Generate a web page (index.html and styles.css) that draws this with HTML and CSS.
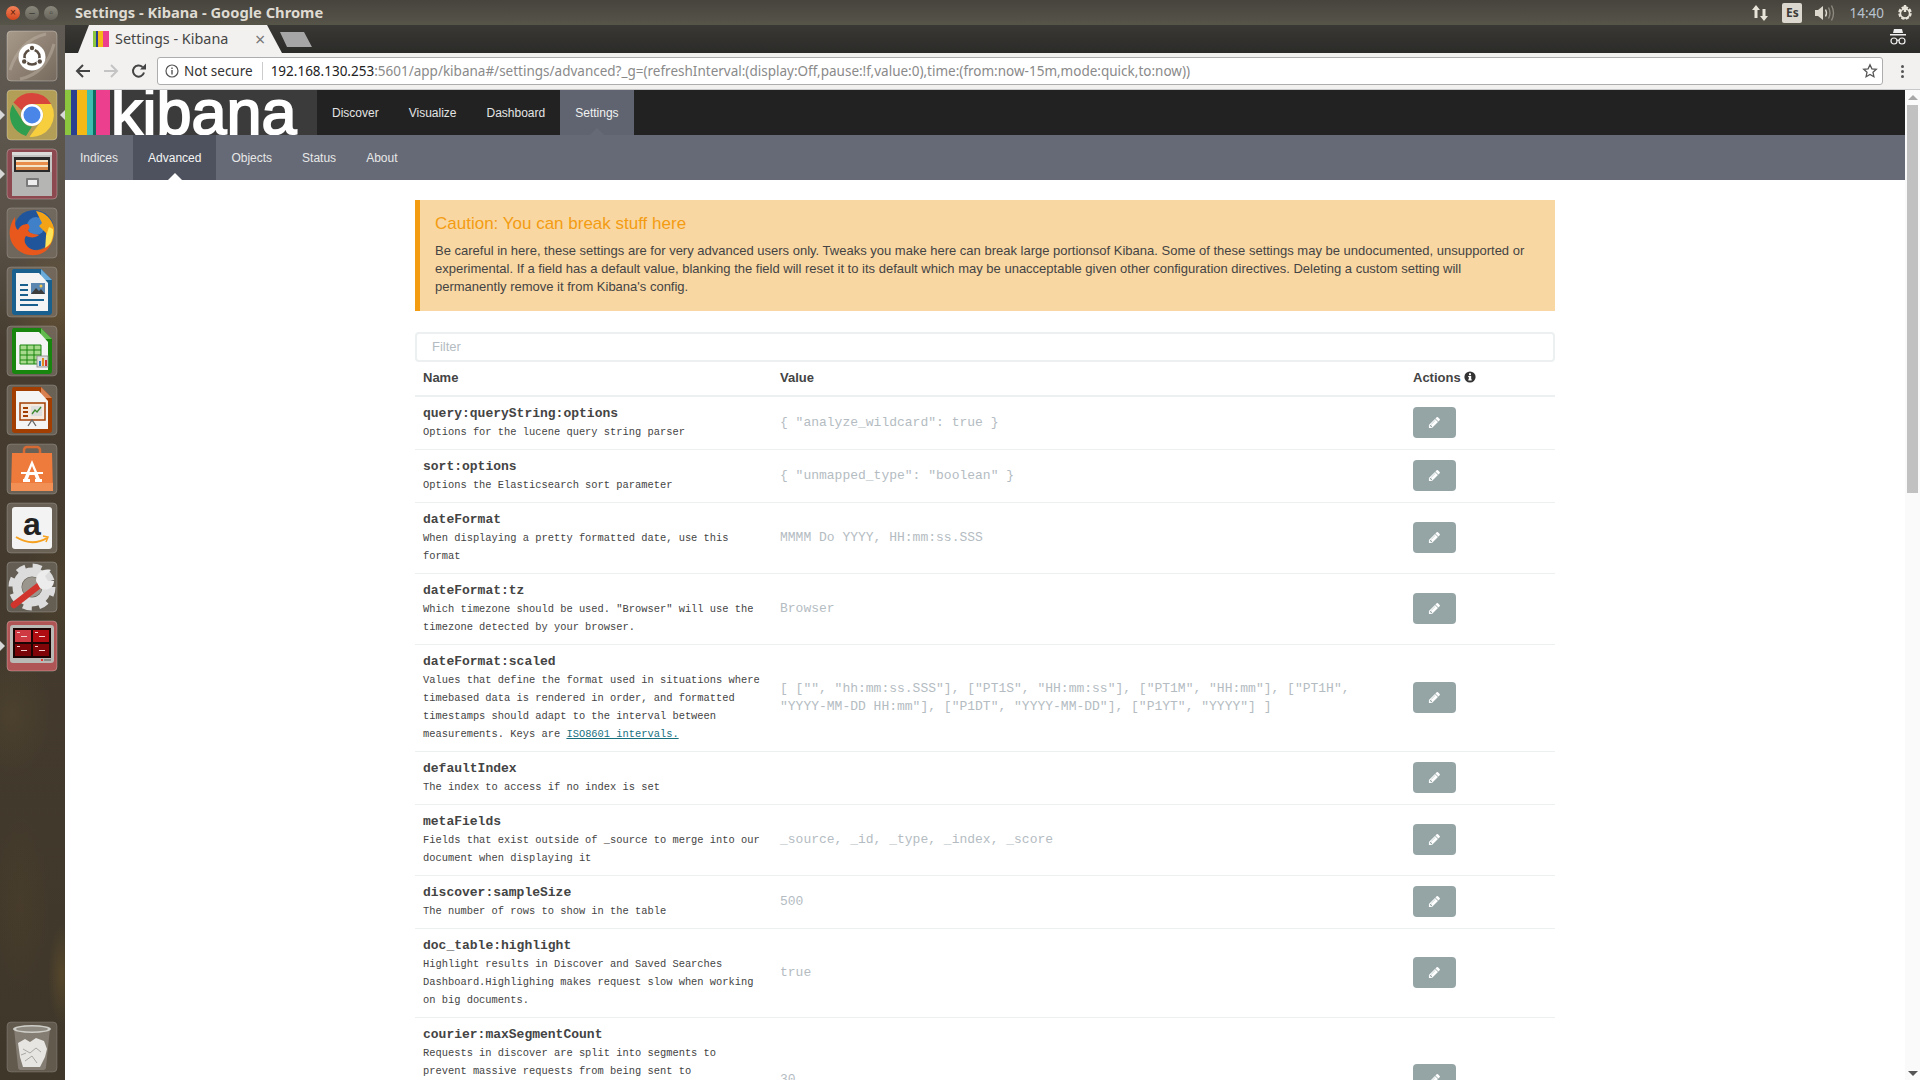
FILE: index.html
```html
<!DOCTYPE html>
<html lang="en">
<head>
<meta charset="utf-8">
<title>Settings - Kibana - Google Chrome</title>
<link rel="stylesheet" href="styles.css">
</head>
<body>
<svg class="defs" width="0" height="0" aria-hidden="true">
  <symbol id="pencil" viewBox="0 0 1792 1792"><path fill="currentColor" d="M491 1536l91-91-235-235-91 91v107h128v128h107zm523-928q0-22-22-22-10 0-17 7l-542 542q-7 7-7 17 0 22 22 22 10 0 17-7l542-542q7-7 7-17zm-54-192l416 416-832 832h-416v-416zm683 96q0 53-37 90l-166 166-416-416 166-165q36-38 90-38 53 0 91 38l235 234q37 39 37 91z"/></symbol>
</svg>
<div class="desktop">
  <header class="topbar">
    <div class="winbtns">
      <span class="wb wb-close">×</span>
      <span class="wb wb-min">–</span>
      <span class="wb wb-max">▫</span>
    </div>
    <div class="wintitle">Settings - Kibana - Google Chrome</div>
    <div class="tray">
      <svg class="tray-arrows" width="18" height="18" viewBox="0 0 18 18"><path fill="#e8e4da" d="M5 1l4 5H6.500v8h-3V6H1zM13 17l-4-5h2.500V5h3v7H17z"/></svg>
      <span class="tray-es">Es</span>
      <svg class="tray-vol" width="22" height="18" viewBox="0 0 22 18"><path fill="#dcd8ce" d="M1 6h3l5-4v14l-5-4H1z"/><path fill="none" stroke="#dcd8ce" stroke-width="1.400" d="M11.500 5.500q2 3.500 0 7"/><path fill="none" stroke="#8d897f" stroke-width="1.400" d="M14.500 3.500q3 5.500 0 11M17.500 1.500q4 7.500 0 15"/></svg>
      <span class="tray-time">14:40</span>
      <svg class="tray-power" width="18" height="18" viewBox="0 0 18 18"><path fill="none" stroke="#e8e4da" stroke-width="2.600" stroke-dasharray="3 1.400" d="M9 3.500a5.500 5.500 0 1 1-.01 0"/><circle cx="9" cy="9.500" r="4.600" fill="none" stroke="#e8e4da" stroke-width="1.600"/><path stroke="#e8e4da" stroke-width="2.400" d="M9 1v7"/></svg>
    </div>
  </header>
  <div class="below">
    <nav class="launcher">
      <a class="tile tile-dash"><svg viewBox="0 0 52 52"><defs><linearGradient id="dashbg" x1="0" y1="0" x2="1" y2="1"><stop offset="0" stop-color="#a89a8a"/><stop offset="1" stop-color="#766a5e"/></linearGradient></defs><rect x="1" y="1" width="50" height="50" rx="4" fill="url(#dashbg)"/><path d="M4 40Q14 10 40 4M48 14Q40 44 14 49" fill="none" stroke="#c4b8aa" stroke-width="3" opacity=".45"/><circle cx="26" cy="27" r="13.500" fill="#fff"/><circle cx="26" cy="27" r="7.500" fill="none" stroke="#5a4d42" stroke-width="2.600"/><circle cx="26" cy="18" r="3.400" fill="#fff"/><circle cx="18.200" cy="31.500" r="3.400" fill="#fff"/><circle cx="33.800" cy="31.500" r="3.400" fill="#fff"/><circle cx="26" cy="18" r="2.200" fill="#5a4d42"/><circle cx="18.200" cy="31.500" r="2.200" fill="#5a4d42"/><circle cx="33.800" cy="31.500" r="2.200" fill="#5a4d42"/></svg></a>
      <a class="tile tile-chrome pip-both"><svg viewBox="0 0 52 52"><rect x="1" y="1" width="50" height="50" rx="4" fill="#b39e57"/><path d="M26 4a22 22 0 0 1 19.100 11H26a11 11 0 0 0-10 6.500L7.500 13.500A22 22 0 0 1 26 4z" fill="#d8453b"/><path d="M6.500 15.500l10.500 17a11 11 0 0 0 9 5l-6 9.500A22 22 0 0 1 6.500 15.500z" fill="#2f9e4e"/><path d="M45 15H28a11 11 0 0 1 8 16L23.500 47.800A22 22 0 0 0 45 15z" fill="#f7cf3e"/><circle cx="26" cy="26" r="11" fill="#fff"/><circle cx="26" cy="26" r="8.500" fill="#4a86e8"/></svg></a>
      <a class="tile tile-files pip-left"><svg viewBox="0 0 52 52"><rect x="1" y="1" width="50" height="50" rx="4" fill="#8c4a50"/><rect x="6" y="4" width="40" height="44" rx="2" fill="#c4c4c2"/><rect x="6" y="4" width="40" height="3" fill="#dcdcda"/><rect x="8" y="9" width="36" height="15" fill="#2a2a2a"/><rect x="10" y="12" width="32" height="2" fill="#f5e5c8"/><rect x="10" y="14" width="32" height="3" fill="#e98d4a"/><rect x="10" y="17" width="32" height="2" fill="#f5e5c8"/><rect x="10" y="19" width="32" height="3" fill="#d9884a"/><path d="M6 24h40v24H6z" fill="#b5b5b3"/><rect x="20" y="30" width="13" height="9" rx="1" fill="#7a7a7a"/><rect x="22" y="32" width="9" height="5" fill="#eee"/></svg></a>
      <a class="tile tile-glass"><svg viewBox="0 0 52 52"><rect x="1" y="1" width="50" height="50" rx="4" fill="#7b7267" opacity=".7"/><circle cx="28" cy="23" r="20" fill="#21559b"/><circle cx="30" cy="19" r="9" fill="#3f80c8"/><path d="M30 4c9 1 16 8 18 17 1 9-3 17-7 21l-1-16-7-7 3-3z" fill="#f4a316"/><path d="M47 22c1 9-3 17-8 21l1-14 3-9z" fill="#fde25a"/><path d="M9 10C3 18 2 28 6 36c5 9 14 13 24 12 8-1 13-6 15-12-5 6-13 9-20 6-6-3-8-9-5-13 4 2 10 2 13-1-6-1-10-2-11-5 2-2 2-4 0-6-5 0-8 2-10 6-3-2-3-7-3-13z" fill="#e8571b"/></svg></a>
      <a class="tile tile-glass"><svg viewBox="0 0 52 52"><rect x="1" y="1" width="50" height="50" rx="4" fill="#7b7267" opacity=".7"/><path d="M7 3h28l11 11v32a3 3 0 0 1-3 3H9a3 3 0 0 1-3-3V5z" fill="#19608f"/><path d="M35 3l11 11H35z" fill="#6aaad8"/><path d="M10 7h23l9 10v28H10z" fill="#f4f4f4"/><g fill="#19608f"><rect x="14" y="18" width="8" height="2"/><rect x="14" y="23" width="8" height="2"/><rect x="14" y="28" width="8" height="2"/><rect x="14" y="33" width="24" height="2"/><rect x="14" y="38" width="18" height="2"/></g><rect x="25" y="17" width="14" height="11" fill="#5b86b0"/><path d="M25 28l5-6 3 3 2-2 4 5z" fill="#3c3c3c"/><circle cx="35" cy="20" r="1.500" fill="#f1c54c"/></svg></a>
      <a class="tile tile-glass"><svg viewBox="0 0 52 52"><rect x="1" y="1" width="50" height="50" rx="4" fill="#7b7267" opacity=".7"/><path d="M7 3h28l11 11v32a3 3 0 0 1-3 3H9a3 3 0 0 1-3-3V5z" fill="#18850f"/><path d="M35 3l11 11H35z" fill="#63bb4f"/><path d="M10 7h23l9 10v28H10z" fill="#f4f4f4"/><rect x="14" y="20" width="21" height="19" fill="#a7d98c"/><path d="M14 20h21v19H14zM14 25h21M14 30h21M14 35h21M21 20v19M28 20v19" fill="none" stroke="#18850f" stroke-width="1"/><rect x="31" y="31" width="11" height="11" fill="#ddd" stroke="#888" stroke-width=".8"/><rect x="33" y="36" width="2" height="5" fill="#2f7fbf"/><rect x="36" y="33" width="2" height="8" fill="#e08a1e"/><rect x="39" y="35" width="2" height="6" fill="#c33"/></svg></a>
      <a class="tile tile-glass"><svg viewBox="0 0 52 52"><rect x="1" y="1" width="50" height="50" rx="4" fill="#7b7267" opacity=".7"/><path d="M7 3h28l11 11v32a3 3 0 0 1-3 3H9a3 3 0 0 1-3-3V5z" fill="#a33e03"/><path d="M35 3l11 11H35z" fill="#d88050"/><path d="M10 7h23l9 10v28H10z" fill="#f4f4f4"/><rect x="14" y="19" width="25" height="17" fill="#f6e9de" stroke="#a33e03" stroke-width="1.500"/><g fill="#a33e03"><rect x="17" y="23" width="5" height="2"/><rect x="17" y="27" width="5" height="2"/><rect x="17" y="31" width="5" height="2"/></g><rect x="25" y="22" width="11" height="10" fill="#dedede"/><path d="M26 30l3-4 2 2 4-5" fill="none" stroke="#3c8a2d" stroke-width="1.300"/><path d="M22 42l4-6 4 6" fill="none" stroke="#666" stroke-width="1.300"/></svg></a>
      <a class="tile tile-glass"><svg viewBox="0 0 52 52"><rect x="1" y="1" width="50" height="50" rx="4" fill="#7b7267" opacity=".7"/><path d="M18 12V7a3 3 0 0 1 3-3h10a3 3 0 0 1 3 3v5" fill="none" stroke="#d66a34" stroke-width="2.500"/><path d="M6 10h40l1 38H5z" fill="#ee7a3c"/><rect x="5" y="40" width="42" height="8" fill="#f28f55"/><path d="M26 17l8 19h-4l-1.500-4h-5L22 36h-4zM23.500 29h5L26 23z" fill="#fff"/><rect x="15" y="29" width="22" height="2" fill="#fff"/><rect x="17" y="36" width="7" height="3" fill="#fff"/><rect x="29" y="36" width="7" height="3" fill="#fff"/></svg></a>
      <a class="tile tile-glass tile-amazon"><svg viewBox="0 0 52 52"><rect x="1" y="1" width="50" height="50" rx="4" fill="#7b7267" opacity=".7"/><rect x="6" y="5" width="40" height="42" rx="3" fill="#f3f3f3"/><text class="amazon-a" x="26" y="33" text-anchor="middle">a</text><path d="M10 35q16 10 31 1" fill="none" stroke="#f5a01e" stroke-width="2"/><path d="M37 34l5 1-2 5" fill="none" stroke="#f5a01e" stroke-width="1.500"/></svg></a>
      <a class="tile tile-glass"><svg viewBox="0 0 52 52"><rect x="1" y="1" width="50" height="50" rx="4" fill="#6b665d" opacity=".8"/><circle cx="26" cy="26" r="15" fill="none" stroke="#dcdcdc" stroke-width="9"/><circle cx="26" cy="26" r="21" fill="none" stroke="#dcdcdc" stroke-width="5" stroke-dasharray="9 7.500"/><circle cx="26" cy="26" r="10" fill="#9a968d"/><path d="M8 44l27-21" stroke="#d0342c" stroke-width="6.500" stroke-linecap="round"/><path d="M30 20c0-8 7-13 15-11l-6 6 3 5 6 0c0 7-8 11-14 7z" fill="#ececec"/></svg></a>
      <a class="tile tile-work pip-left"><svg viewBox="0 0 52 52"><rect x="1" y="1" width="50" height="50" rx="4" fill="#b05555"/><rect x="4" y="5" width="44" height="38" rx="3" fill="#b9b9b5"/><rect x="7" y="8" width="38" height="30" fill="#1a0505"/><rect x="9" y="10" width="16" height="12" fill="#cf3a42"/><rect x="27" y="10" width="16" height="12" fill="#b00d12"/><rect x="9" y="24" width="16" height="12" fill="#7a0509"/><rect x="27" y="24" width="16" height="12" fill="#7f0508"/><g fill="#f4d0d0"><rect x="11" y="12" width="3" height="1"/><rect x="29" y="12" width="3" height="1"/><rect x="11" y="26" width="3" height="1"/><rect x="29" y="26" width="3" height="1"/><rect x="15" y="16" width="6" height="1"/><rect x="33" y="16" width="6" height="1"/><rect x="15" y="30" width="6" height="1"/><rect x="33" y="30" width="6" height="1"/></g><rect x="35" y="39" width="2" height="2" fill="#e33"/><rect x="38" y="39" width="7" height="2" fill="#8a8a86"/></svg></a>
      <a class="tile tile-glass tile-trash"><svg viewBox="0 0 52 52"><rect x="1" y="1" width="50" height="50" rx="4" fill="#7b7267" opacity=".6"/><path d="M8 7h36l-4 39a3 3 0 0 1-3 3H15a3 3 0 0 1-3-3z" fill="#a09b92" opacity=".55"/><ellipse cx="26" cy="8" rx="19" ry="4" fill="#cfcdc7"/><ellipse cx="26" cy="8" rx="16" ry="2.500" fill="#8e8a82"/><path d="M12 22l7-4 5 3 6-4 8 3 3 8-2 8-5 10H17l-3-10z" fill="#e6e5e1"/><path d="M17 28l7 4 6-5 5 4M19 40l7-5 5 7M15 34l5-2" fill="none" stroke="#a9a7a2" stroke-width="1"/></svg></a>
    </nav>
    <div class="browser">
      <div class="tabstrip">
        <div class="tab">
          <span class="favicon"><i class="f1"></i><i class="f2"></i><i class="f3"></i><i class="f4"></i></span>
          <span class="tab-title">Settings - Kibana</span>
          <span class="tab-close">×</span>
        </div>
        <span class="newtab"></span>
        <svg class="incognito" width="18" height="18" viewBox="0 0 18 18"><path fill="#eee" d="M5 1h8l1 4H4z"/><rect x="1" y="6" width="16" height="1.500" fill="#eee"/><g fill="none" stroke="#eee" stroke-width="1.200"><circle cx="5" cy="13" r="3"/><circle cx="13" cy="13" r="3"/><path d="M8 12.500q1-.6 2 0"/></g></svg>
      </div>
      <div class="toolbar">
        <svg class="tb-ico" width="16" height="16" viewBox="0 0 16 16"><path fill="none" stroke="#444" stroke-width="2" d="M15 8H3M8 2L2 8l6 6"/></svg>
        <svg class="tb-ico" width="16" height="16" viewBox="0 0 16 16"><path fill="none" stroke="#c4c4c4" stroke-width="2" d="M1 8h12M8 2l6 6-6 6"/></svg>
        <svg class="tb-ico" width="16" height="16" viewBox="0 0 16 16"><path fill="none" stroke="#444" stroke-width="2" d="M13 9.500A5.600 5.600 0 1 1 11.500 4"/><path fill="#444" d="M9 6.500h6v-6z"/></svg>
        <div class="omnibox">
          <svg class="omni-info" width="14" height="14" viewBox="0 0 14 14"><circle cx="7" cy="7" r="6" fill="none" stroke="#555" stroke-width="1.200"/><rect x="6.300" y="6" width="1.400" height="4.500" fill="#555"/><rect x="6.300" y="3.500" width="1.400" height="1.500" fill="#555"/></svg>
          <span class="omni-secure">Not secure</span>
          <span class="omni-url"><b>192.168.130.253</b>:5601/app/kibana#/settings/advanced?_g=(refreshInterval:(display:Off,pause:!f,value:0),time:(from:now-15m,mode:quick,to:now))</span>
          <svg class="omni-star" width="16" height="16" viewBox="0 0 16 16"><path fill="none" stroke="#555" stroke-width="1.300" d="M8 1.800l1.900 4 4.400.5-3.300 3 .9 4.400L8 11.500l-3.900 2.200.9-4.400-3.300-3 4.400-.5z"/></svg>
        </div>
        <span class="kebab"><i></i><i></i><i></i></span>
      </div>
      <div class="viewport">
        <main class="page">
          <div class="navbar">
            <div class="logo">
              <span class="stripes"><i class="s1"></i><i class="s2"></i><i class="s3"></i><i class="s4"></i><i class="s5"></i><i class="s6"></i></span>
              <span class="logo-word">kibana</span>
            </div>
            <a class="nav-item">Discover</a>
            <a class="nav-item">Visualize</a>
            <a class="nav-item">Dashboard</a>
            <a class="nav-item nav-active">Settings</a>
          </div>
          <div class="subnav">
            <a class="sub-item">Indices</a>
            <a class="sub-item sub-active">Advanced</a>
            <a class="sub-item">Objects</a>
            <a class="sub-item">Status</a>
            <a class="sub-item">About</a>
          </div>
          <div class="container">
            <section class="caution">
              <h3 class="caution-title">Caution: You can break stuff here</h3>
              <p class="caution-text">Be careful in here, these settings are for very advanced users only. Tweaks you make here can break large portionsof Kibana. Some of these settings may be undocumented, unsupported or experimental. If a field has a default value, blanking the field will reset it to its default which may be unacceptable given other configuration directives. Deleting a custom setting will permanently remove it from Kibana's config.</p>
            </section>
            <div class="filter">Filter</div>
            <table class="settings">
              <colgroup><col class="c-name"><col class="c-value"><col class="c-act"></colgroup>
              <thead>
                <tr><th>Name</th><th>Value</th><th>Actions <svg class="info" width="12" height="12" viewBox="0 0 12 12"><circle cx="6" cy="6" r="5.600" fill="#333"/><rect x="4.800" y="5" width="2.400" height="4.200" fill="#fff"/><rect x="4.200" y="8.400" width="3.600" height="1" fill="#fff"/><rect x="4.200" y="5" width="1.400" height="1" fill="#fff"/><rect x="5" y="2.300" width="2" height="1.900" fill="#fff"/></svg></th></tr>
              </thead>
              <tbody>
                <tr><td><div class="k">query:queryString:options</div><div class="d">Options for the lucene query string parser</div></td><td class="v">{ "analyze_wildcard": true }</td><td class="a"><a class="edit"><svg width="13" height="13"><use href="#pencil"/></svg></a></td></tr>
                <tr><td><div class="k">sort:options</div><div class="d">Options the Elasticsearch sort parameter</div></td><td class="v">{ "unmapped_type": "boolean" }</td><td class="a"><a class="edit"><svg width="13" height="13"><use href="#pencil"/></svg></a></td></tr>
                <tr><td><div class="k">dateFormat</div><div class="d">When displaying a pretty formatted date, use this format</div></td><td class="v">MMMM Do YYYY, HH:mm:ss.SSS</td><td class="a"><a class="edit"><svg width="13" height="13"><use href="#pencil"/></svg></a></td></tr>
                <tr><td><div class="k">dateFormat:tz</div><div class="d">Which timezone should be used. "Browser" will use the timezone detected by your browser.</div></td><td class="v">Browser</td><td class="a"><a class="edit"><svg width="13" height="13"><use href="#pencil"/></svg></a></td></tr>
                <tr><td><div class="k">dateFormat:scaled</div><div class="d">Values that define the format used in situations where timebased data is rendered in order, and formatted timestamps should adapt to the interval between measurements. Keys are <a class="iso">ISO8601 intervals.</a></div></td><td class="v">[ ["", "hh:mm:ss.SSS"], ["PT1S", "HH:mm:ss"], ["PT1M", "HH:mm"], ["PT1H", "YYYY-MM-DD HH:mm"], ["P1DT", "YYYY-MM-DD"], ["P1YT", "YYYY"] ]</td><td class="a"><a class="edit"><svg width="13" height="13"><use href="#pencil"/></svg></a></td></tr>
                <tr><td><div class="k">defaultIndex</div><div class="d">The index to access if no index is set</div></td><td class="v"></td><td class="a"><a class="edit"><svg width="13" height="13"><use href="#pencil"/></svg></a></td></tr>
                <tr><td><div class="k">metaFields</div><div class="d">Fields that exist outside of _source to merge into our document when displaying it</div></td><td class="v">_source, _id, _type, _index, _score</td><td class="a"><a class="edit"><svg width="13" height="13"><use href="#pencil"/></svg></a></td></tr>
                <tr><td><div class="k">discover:sampleSize</div><div class="d">The number of rows to show in the table</div></td><td class="v">500</td><td class="a"><a class="edit"><svg width="13" height="13"><use href="#pencil"/></svg></a></td></tr>
                <tr><td><div class="k">doc_table:highlight</div><div class="d">Highlight results in Discover and Saved Searches Dashboard.Highlighing makes request slow when working on big documents.</div></td><td class="v">true</td><td class="a"><a class="edit"><svg width="13" height="13"><use href="#pencil"/></svg></a></td></tr>
                <tr><td><div class="k">courier:maxSegmentCount</div><div class="d">Requests in discover are split into segments to prevent massive requests from being sent to elasticsearch. This setting attempts to prevent the list of segments from getting too long, which might cause requests to take much longer to process</div></td><td class="v">30</td><td class="a"><a class="edit"><svg width="13" height="13"><use href="#pencil"/></svg></a></td></tr>
              </tbody>
            </table>
          </div>
        </main>
        <aside class="scrollbar">
          <span class="sb-up"></span>
          <span class="sb-thumb"></span>
          <span class="sb-space"></span>
          <span class="sb-down"></span>
        </aside>
      </div>
    </div>
  </div>
</div>
</body>
</html>
```
FILE: styles.css
```css
* { box-sizing: border-box; }
html, body { margin: 0; height: 100%; overflow: hidden; }
body { font-family: "Liberation Sans", Arial, sans-serif; background: #fff; }
.defs { display: block; height: 0; }
.desktop { width: 1920px; height: 1080px; display: flex; flex-direction: column; overflow: hidden; }

/* Ubuntu top bar */
.topbar { height: 25px; flex: none; display: flex; align-items: center; background: linear-gradient(#46443d, #57544a); color: #dfdbd2; }
.winbtns { display: flex; gap: 5px; padding-left: 6px; width: 75px; flex: none; }
.wb { width: 14px; height: 14px; border-radius: 50%; display: flex; align-items: center; justify-content: center; font-size: 10px; line-height: 1; color: #3a3a35; background: linear-gradient(#8a877d, #66635a); }
.wb-close { background: linear-gradient(#f2835a, #d4451c); color: #5a1c08; }
.wintitle { font-family: "Noto Sans", sans-serif; font-weight: 700; font-size: 14.700px; line-height: 22px; padding-bottom: 1px; flex: 1; }
.tray { display: flex; align-items: center; flex: none; padding-right: 6px; }
.tray-arrows { margin-right: 13px; }
.tray-es { width: 20px; height: 20px; background: #dcd8cf; color: #3c3b37; border-radius: 2px; display: flex; align-items: center; justify-content: center; font: 700 12px "Noto Sans", sans-serif; margin-right: 12px; }
.tray-vol { margin-right: 13px; }
.tray-time { font-family: "Noto Sans", sans-serif; font-size: 13.500px; color: #b9c3d0; margin-right: 12px; }

.below { flex: 1; display: flex; min-height: 0; }

/* Launcher */
.launcher { width: 65px; flex: none; display: flex; flex-direction: column; gap: 7px; padding: 5px 0 7px 6px;
  background:
    radial-gradient(ellipse 50px 70px at 55px 280px, rgba(150,110,50,.3), transparent),
    radial-gradient(ellipse 40px 60px at 12px 690px, rgba(125,100,50,.16), transparent),
    radial-gradient(ellipse 30px 70px at 55px 560px, rgba(125,95,45,.16), transparent),
    radial-gradient(ellipse 30px 90px at 20px 880px, rgba(110,85,40,.14), transparent),
    radial-gradient(ellipse 14px 50px at 62px 950px, rgba(150,115,45,.25), transparent),
    linear-gradient(#5f5a53 0, #5a5248 200px, #463d30 320px, #3f372a 100%); }
.tile { width: 52px; height: 52px; flex: none; display: block; position: relative; }
.tile svg { display: block; width: 52px; height: 52px; }
.tile svg > rect:first-of-type { stroke: rgba(255,255,255,.28); stroke-width: 1; }
.tile-trash { margin-top: auto; }
.pip-both::before, .pip-left::before { content: ""; position: absolute; left: -6px; top: 21px; border: 5px solid transparent; border-left-color: #d8d8d8; border-right-width: 0; }
.pip-both::after { content: ""; position: absolute; right: -7px; top: 21px; border: 5px solid transparent; border-right-color: #d8d8d8; border-left-width: 0; }
.amazon-a { font: 700 32px "Liberation Sans", sans-serif; fill: #222; }

/* Browser chrome */
.browser { flex: 1; min-width: 0; display: flex; flex-direction: column; }
.tabstrip { height: 28px; flex: none; display: flex; align-items: flex-end; background: linear-gradient(#393834, #2b2b29); padding-left: 13px; }
.tab { width: 204px; height: 28px; flex: none; display: flex; align-items: center; padding: 0 0 1px 15px; background: #f2f1f0; clip-path: polygon(0 100%, 11px 0, 189px 0, 204px 100%); font: 14.400px "Noto Sans", sans-serif; color: #444; }
.favicon { display: flex; width: 16px; height: 16px; }
.favicon i { display: block; height: 16px; }
.f1 { width: 3px; background: #8cc63f; }
.f2 { width: 2px; background: #2a3f8f; }
.f3 { width: 5px; background: #f5b915; }
.f4 { width: 6px; background: #ec408f; }
.tab-title { margin-left: 6px; width: 140px; white-space: nowrap; }
.tab-close { font-size: 18px; color: #777; line-height: 1; }
.newtab { width: 32px; height: 15px; background: #a6a6a6; margin: 0 0 6px -2px; clip-path: polygon(0 0, 24px 0, 32px 100%, 7px 100%); flex: none; }
.incognito { margin-left: auto; margin-right: 13px; margin-bottom: 7px; }
.toolbar { height: 37px; flex: none; display: flex; align-items: center; background: #f2f1f0; border-bottom: 1px solid #c8c8c8; padding-left: 10px; }
.tb-ico { margin-right: 12px; flex: none; }
.tb-ico:nth-child(3) { margin-right: 10px; }
.omnibox { width: 1726px; height: 28px; flex: none; display: flex; align-items: center; background: #fff; border: 1px solid #adadad; border-radius: 3px; padding-left: 7px; font: 13.500px "Noto Sans", sans-serif; color: #8a8a8a; white-space: nowrap; }
.omni-info { flex: none; }
.omni-secure { color: #333; margin-left: 5px; padding-right: 9px; border-right: 1px solid #ccc; line-height: 18px; }
.omni-url { margin-left: 8px; flex: 1; }
.omni-url b { font-weight: 400; color: #222; }
.omni-star { margin-right: 4px; flex: none; }
.kebab { display: flex; flex-direction: column; gap: 2px; margin-left: 18px; }
.kebab i { width: 3px; height: 3px; border-radius: 50%; background: #555; display: block; }

/* Page */
.viewport { flex: 1; min-height: 0; display: flex; }
.page { flex: 1; min-width: 0; overflow: hidden; background: #fff; }
.navbar { height: 45px; display: flex; background: #222; }
.logo { width: 252px; height: 45px; flex: none; display: flex; background: #3b3b3b; overflow: hidden; }
.stripes { display: flex; width: 45px; flex: none; }
.stripes i { display: block; height: 45px; }
.s1 { width: 6px; background: #8cc63f; }
.s2 { width: 6px; background: #2a3f8f; }
.s3 { width: 10px; background: #f5b915; }
.s4 { width: 6px; background: #3ebeb0; }
.s5 { width: 3px; background: #0d6d60; }
.s6 { width: 14px; background: #ec408f; }
.logo-word { font-size: 63px; line-height: 45px; color: #fff; margin-left: 1px; height: 45px; display: block; -webkit-text-stroke: 1.900px #fff; }
.nav-item { font-size: 12px; line-height: 46px; padding: 0 15px; color: #e4e4e4; position: relative; }
.nav-active { background: #5f6470; color: #f2f2f2; }
.nav-active::after { content: ""; position: absolute; left: 50%; bottom: 0; margin-left: -7px; border: 7px solid transparent; border-bottom-color: #656a76; border-top-width: 0; }
.subnav { height: 45px; display: flex; background: #656a76; }
.sub-item { font-size: 12px; line-height: 46px; padding: 0 15px; color: #e8e8e8; position: relative; }
.sub-active { background: #4d525e; color: #f5f5f5; }
.sub-active::after { content: ""; position: absolute; left: 50%; bottom: 0; margin-left: -7px; border: 7px solid transparent; border-bottom-color: #fff; border-top-width: 0; }
.container { width: 1140px; margin: 0 auto; padding-top: 20px; }
.caution { height: 111px; background: #f9d7a2; border-left: 5px solid #f39c12; padding: 14px 25px 15px 15px; color: #444; }
.caution-title { margin: 0 0 9px; font-weight: 400; font-size: 17px; line-height: 19px; color: #f39c12; }
.caution-text { margin: 0; font-size: 13px; line-height: 18px; }
.filter { height: 30px; margin-top: 21px; border: 2px solid #ecf0f1; border-radius: 4px; padding-left: 15px; font-size: 13px; line-height: 26px; color: #b4bcc2; }
.settings { width: 1140px; table-layout: fixed; border-collapse: collapse; color: #444; }
.c-name { width: 357px; }
.c-value { width: 633px; }
.c-act { width: 150px; }
.settings th { height: 34px; padding: 0 8px 2px; text-align: left; font-size: 13px; font-weight: 700; border-bottom: 2px solid #ecf0f1; }
.settings td { padding: 8px; border-bottom: 1px solid #ecf0f1; vertical-align: middle; }
.settings td.a { padding: 6px 8px 8px; }
.info { vertical-align: -1px; }
.k { font: 700 13px/18px "Liberation Mono", monospace; color: #444; }
.d { font: 10.400px/18px "Liberation Mono", monospace; color: #444; }
.iso { color: #18707f; text-decoration: underline; }
.settings td.v { font: 13px/18px "Liberation Mono", monospace; color: #b4bcc2; padding: 8px 16px 8px 8px; }
.edit { width: 43px; height: 31px; display: flex; align-items: center; justify-content: center; background: #95a5a6; border-radius: 4px; color: #fff; }

.scrollbar { width: 15px; flex: none; display: flex; flex-direction: column; align-items: center; background: #fafafa; padding: 5px 0 4px; }
.sb-up { width: 0; height: 0; border: 5px solid transparent; border-bottom-color: #a8a8a8; border-top-width: 0; flex: none; margin-bottom: 5px; }
.sb-thumb { width: 11px; height: 388px; background: #c1c1c1; flex: none; }
.sb-space { flex: 1; }
.sb-down { width: 0; height: 0; border: 5px solid transparent; border-top-color: #555; border-bottom-width: 0; flex: none; }
```
